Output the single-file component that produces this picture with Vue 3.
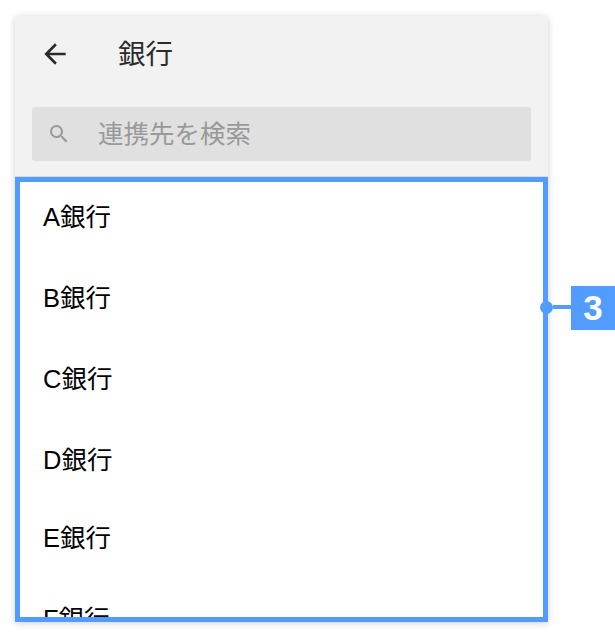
<script setup>
const banks = ['A銀行', 'B銀行', 'C銀行', 'D銀行', 'E銀行', 'F銀行']
</script>

<template>
  <div class="page">
    <section class="panel">
      <header class="head">
        <div class="title-row">
          <svg class="back" viewBox="0 0 24 24" width="32" height="32" aria-hidden="true">
            <path d="M20 11H7.83l5.59-5.59L12 4l-8 8 8 8 1.41-1.41L7.83 13H20v-2z" fill="#2b2b2b" />
          </svg>
          <h1 class="title">銀行</h1>
        </div>
        <div class="search">
          <svg class="glass" viewBox="0 0 24 24" width="24" height="24" aria-hidden="true">
            <path d="M15.5 14h-.79l-.28-.27A6.47 6.47 0 0 0 16 9.5 6.5 6.5 0 1 0 9.5 16c1.61 0 3.09-.59 4.23-1.57l.27.28v.79l5 4.99L20.49 19l-4.99-5zm-6 0C7.01 14 5 11.99 5 9.5S7.01 5 9.5 5 14 7.01 14 9.5 11.99 14 9.5 14z" fill="#999" />
          </svg>
          <span class="placeholder">連携先を検索</span>
        </div>
      </header>
      <div class="list-wrap">
        <ul class="list">
          <li v-for="bank in banks" :key="bank" class="row">{{ bank }}</li>
        </ul>
        <div class="highlight"></div>
        <div class="callout">
          <span class="dot"></span>
          <span class="line"></span>
          <span class="badge">3</span>
        </div>
      </div>
    </section>
  </div>
</template>

<style scoped>
.page {
  width: 615px;
  height: 637px;
  box-sizing: border-box;
  padding: 16px 67px 0 15px;
  overflow: hidden;
  background: #fff;
  font-family: "Liberation Sans", "Noto Sans CJK JP", sans-serif;
}
.panel {
  height: 606px;
  display: flex;
  flex-direction: column;
  border-radius: 5px 5px 0 0;
  box-shadow: 0 1px 7px rgba(0, 0, 0, 0.2);
  background: #fff;
}
.head {
  height: 161px;
  flex: none;
  box-sizing: border-box;
  background: #f2f2f2;
  border-radius: 5px 5px 0 0;
  padding: 0 17px;
  display: flex;
  flex-direction: column;
  border-bottom: 1px solid #dcdcdc;
}
.title-row {
  height: 91px;
  flex: none;
  display: flex;
  align-items: center;
  padding-bottom: 15px;
  box-sizing: border-box;
}
.back {
  margin-left: 7px;
  flex: none;
}
.title {
  margin: 2px 0 0 47px;
  font-size: 27.5px;
  line-height: 40px;
  font-weight: 400;
  color: #2b2b2b;
}
.search {
  height: 54px;
  flex: none;
  display: flex;
  align-items: center;
  background: #e0e0e0;
  border-radius: 3px;
  padding-left: 15px;
}
.glass {
  flex: none;
}
.placeholder {
  margin-left: 27px;
  font-size: 25.5px;
  line-height: 40px;
  color: #999;
}
.list-wrap {
  position: relative;
  flex: 1;
  min-height: 0;
}
.list {
  list-style: none;
  margin: 0;
  padding: 0;
  height: 100%;
  overflow: hidden;
}
.row {
  height: 81px;
  padding-left: 28px;
  box-sizing: border-box;
  font-size: 25.5px;
  line-height: 80px;
  color: #000;
}
.row:nth-child(4) {
  height: 78px;
}
.highlight {
  position: absolute;
  inset: 0;
  border: 5px solid #529cff;
  pointer-events: none;
}
.callout {
  position: absolute;
  left: 525px;
  top: 109px;
  width: 75px;
  height: 44px;
  display: flex;
  align-items: center;
}
.dot {
  width: 13px;
  height: 13px;
  flex: none;
  margin-bottom: 2px;
  border-radius: 50%;
  background: #529cff;
}
.line {
  flex: 1;
  height: 4px;
  margin-bottom: 2px;
  background: #529cff;
}
.badge {
  width: 44px;
  height: 44px;
  flex: none;
  display: flex;
  align-items: center;
  justify-content: center;
  background: #529cff;
  color: #fff;
  font-size: 35px;
  font-weight: 700;
}
</style>
